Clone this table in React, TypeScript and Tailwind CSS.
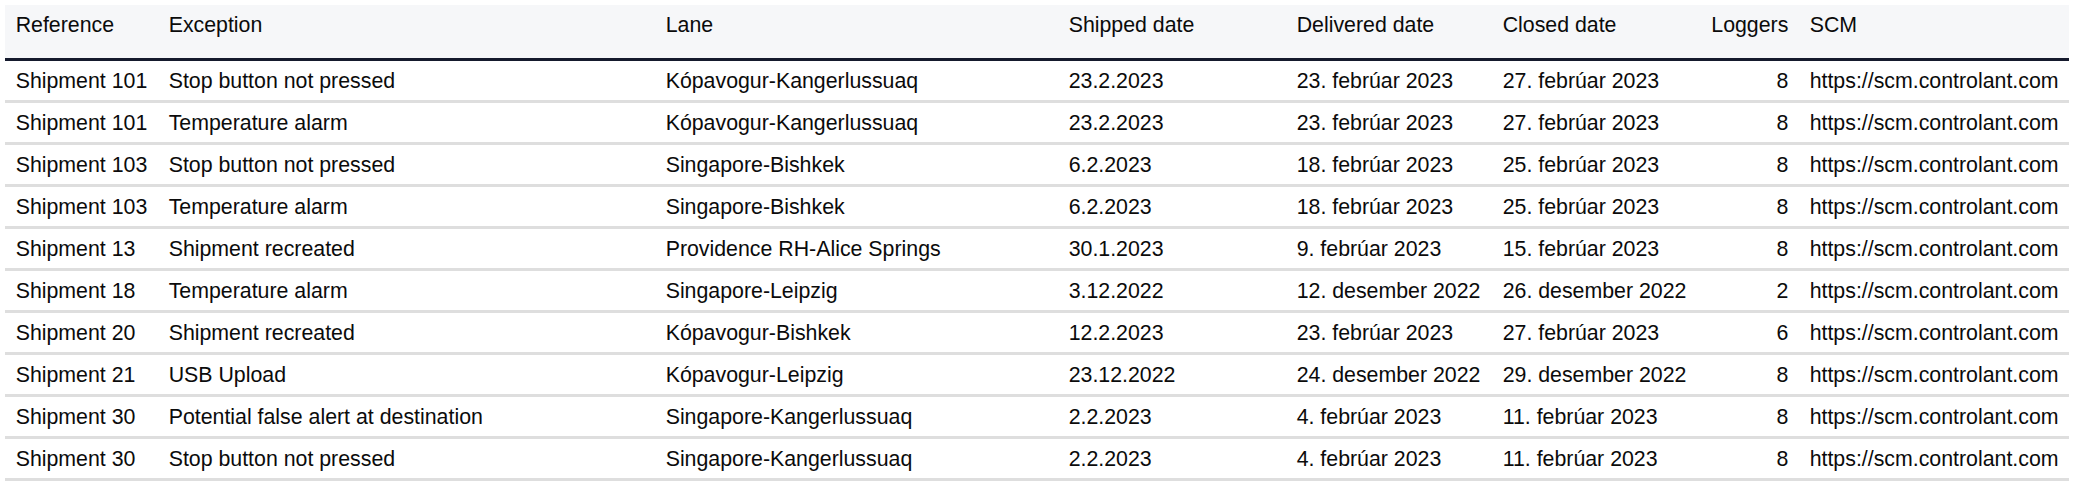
const columns = [
  { key: 'reference', label: 'Reference' },
  { key: 'exception', label: 'Exception' },
  { key: 'lane', label: 'Lane' },
  { key: 'shipped', label: 'Shipped date' },
  { key: 'delivered', label: 'Delivered date' },
  { key: 'closed', label: 'Closed date' },
  { key: 'loggers', label: 'Loggers', right: true },
  { key: 'scm', label: 'SCM' },
]

type Row = {
  reference: string
  exception: string
  lane: string
  shipped: string
  delivered: string
  closed: string
  loggers: number
  scm: string
}

const SCM = 'https://scm.controlant.com'

const rows: Row[] = [
  { reference: 'Shipment 101', exception: 'Stop button not pressed', lane: 'Kópavogur-Kangerlussuaq', shipped: '23.2.2023', delivered: '23. febrúar 2023', closed: '27. febrúar 2023', loggers: 8, scm: SCM },
  { reference: 'Shipment 101', exception: 'Temperature alarm', lane: 'Kópavogur-Kangerlussuaq', shipped: '23.2.2023', delivered: '23. febrúar 2023', closed: '27. febrúar 2023', loggers: 8, scm: SCM },
  { reference: 'Shipment 103', exception: 'Stop button not pressed', lane: 'Singapore-Bishkek', shipped: '6.2.2023', delivered: '18. febrúar 2023', closed: '25. febrúar 2023', loggers: 8, scm: SCM },
  { reference: 'Shipment 103', exception: 'Temperature alarm', lane: 'Singapore-Bishkek', shipped: '6.2.2023', delivered: '18. febrúar 2023', closed: '25. febrúar 2023', loggers: 8, scm: SCM },
  { reference: 'Shipment 13', exception: 'Shipment recreated', lane: 'Providence RH-Alice Springs', shipped: '30.1.2023', delivered: '9. febrúar 2023', closed: '15. febrúar 2023', loggers: 8, scm: SCM },
  { reference: 'Shipment 18', exception: 'Temperature alarm', lane: 'Singapore-Leipzig', shipped: '3.12.2022', delivered: '12. desember 2022', closed: '26. desember 2022', loggers: 2, scm: SCM },
  { reference: 'Shipment 20', exception: 'Shipment recreated', lane: 'Kópavogur-Bishkek', shipped: '12.2.2023', delivered: '23. febrúar 2023', closed: '27. febrúar 2023', loggers: 6, scm: SCM },
  { reference: 'Shipment 21', exception: 'USB Upload', lane: 'Kópavogur-Leipzig', shipped: '23.12.2022', delivered: '24. desember 2022', closed: '29. desember 2022', loggers: 8, scm: SCM },
  { reference: 'Shipment 30', exception: 'Potential false alert at destination', lane: 'Singapore-Kangerlussuaq', shipped: '2.2.2023', delivered: '4. febrúar 2023', closed: '11. febrúar 2023', loggers: 8, scm: SCM },
  { reference: 'Shipment 30', exception: 'Stop button not pressed', lane: 'Singapore-Kangerlussuaq', shipped: '2.2.2023', delivered: '4. febrúar 2023', closed: '11. febrúar 2023', loggers: 8, scm: SCM },
]

// fixed column track so every row lines up with the header
const grid = 'grid grid-cols-[153px_497px_403px_228px_206px_207px_100px_270px]'

export default function App() {
  return (
    <div className="min-h-screen bg-white pt-[5px] pl-[5px] font-['Liberation_Sans',Arial,sans-serif] text-[21.33px] leading-[24px] text-[#0b0b0b]">
      <div className="w-[2064px]">
        <div className={`${grid} h-[56px] bg-[#f6f7f9] border-b-[3px] border-[#151a2d]`}>
          {columns.map((c) => (
            <div key={c.key} className={`px-[10.67px] pt-[8px] whitespace-nowrap ${c.right ? 'text-right' : ''}`}>
              {c.label}
            </div>
          ))}
        </div>

        {rows.map((r, i) => (
          <div key={i} className={`${grid} h-[42px] items-center border-b-[3px] border-[#dedede]`}>
            <div className="px-[10.67px] whitespace-nowrap">{r.reference}</div>
            <div className="px-[10.67px] whitespace-nowrap">{r.exception}</div>
            <div className="px-[10.67px] whitespace-nowrap">{r.lane}</div>
            <div className="px-[10.67px] whitespace-nowrap">{r.shipped}</div>
            <div className="px-[10.67px] whitespace-nowrap">{r.delivered}</div>
            <div className="px-[10.67px] whitespace-nowrap">{r.closed}</div>
            <div className="px-[10.67px] whitespace-nowrap text-right">{r.loggers}</div>
            <div className="px-[10.67px] whitespace-nowrap">{r.scm}</div>
          </div>
        ))}
      </div>
    </div>
  )
}
